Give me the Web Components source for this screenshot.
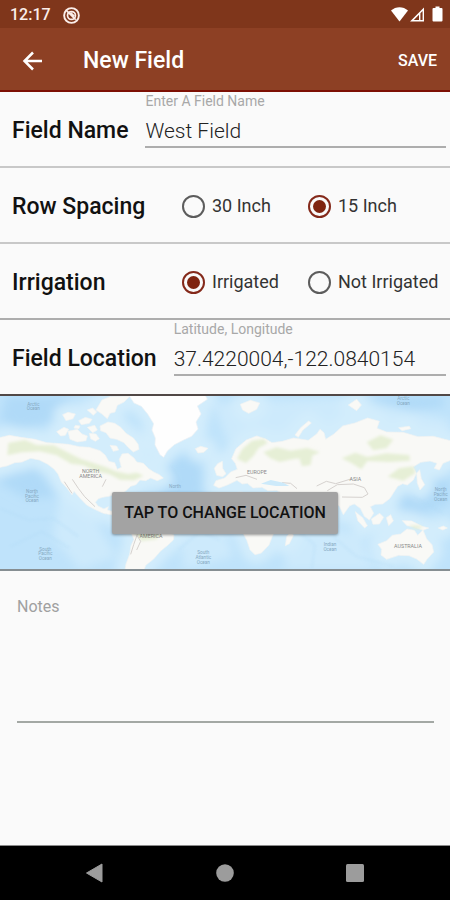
<!DOCTYPE html>
<html lang="en">
<head>
<meta charset="UTF-8">
<meta name="viewport" content="width=device-width, initial-scale=1">
<title>New Field</title>
<style>
  body {
    margin: 0;
    background: #fafafa;
    color: #151515;
    font-family: Roboto, "Liberation Sans", sans-serif;
  }
</style>
</head>
<body>
<field-screen>
  <status-bar slot="top" time="12:17"></status-bar>
  <app-bar slot="top" action="SAVE">New Field</app-bar>
  <text-row label="Field Name" hint="Enter A Field Name" value="West Field"></text-row>
  <choice-row label="Row Spacing" options="30 Inch|15 Inch" selected="1"></choice-row>
  <choice-row class="thin" label="Irrigation" options="Irrigated|Not Irrigated" selected="0"></choice-row>
  <text-row class="dark" label="Field Location" hint="Latitude, Longitude" value="37.4220004,-122.0840154"></text-row>
  <map-picker>TAP TO CHANGE LOCATION</map-picker>
  <notes-field>Notes</notes-field>
  <nav-bar slot="bottom"></nav-bar>
</field-screen>

<script>
// Styles shared by every element
const baseStyle = `
  :host, *, *::before, *::after { box-sizing: border-box; }
  svg { display: block; }
  button { font: inherit; color: inherit; background: none; border: none; margin: 0; padding: 0; cursor: pointer; }
`;

// Styles shared by the form rows
const rowStyle = `
  :host {
    display: block;
    border-bottom: 2px solid #c8c8c8;
  }
  :host(.thin) { border-bottom-color: #adadad; }
  :host(.dark) { border-bottom-color: #514846; }
  .row { min-height: 74px; padding: 0 4px 0 12px; }
  .title { padding-top: 4px; font-size: 23px; line-height: 28px; font-weight: 500; color: #111; white-space: nowrap; }
`;

class FieldScreen extends HTMLElement {
  connectedCallback() {
    const shadow = this.attachShadow({ mode: 'open' });
    shadow.innerHTML = `
      <style>
        ${baseStyle}
        :host { display: flex; flex-direction: column; min-height: 100vh; }
        main { flex: 1; }
      </style>
      <header><slot name="top"></slot></header>
      <main><slot></slot></main>
      <footer><slot name="bottom"></slot></footer>
    `;
  }
}

class StatusBar extends HTMLElement {
  connectedCallback() {
    const shadow = this.attachShadow({ mode: 'open' });
    shadow.innerHTML = `
      <style>
        ${baseStyle}
        :host {
          display: flex;
          align-items: center;
          justify-content: space-between;
          height: 28px;
          padding: 2px 7px 0 10px;
          background: #7f361b;
          color: #fbeeea;
        }
        .left { display: flex; align-items: center; gap: 12px; }
        .right { display: flex; align-items: center; }
        .time { font-size: 16px; line-height: 26px; font-weight: 500; }
      </style>
      <div class="left">
        <span class="time">${this.getAttribute('time')}</span>
        <svg width="17" height="17" viewBox="0 0 18 18" fill="none" stroke="currentColor">
          <circle cx="9" cy="9" r="7.800" stroke-width="2"/>
          <circle cx="9" cy="9" r="4.200" stroke-width="1.800"/>
          <path d="M4 4L13.500 13.500M8 6l4 4" stroke-width="1.800"/>
        </svg>
      </div>
      <div class="right">
        <svg width="52" height="18" viewBox="0 0 52 18" fill="#fff">
          <path d="M0 4.500C4.800 0 12.200 0 17 4.500L8.500 15.500z"/>
          <path d="M33 1.500v14H19zM28 8.800l-5.200 5.200H28zM31.600 5l-2.200 2.200V14h2.200z" fill-rule="evenodd"/>
          <path d="M44.500 .5h4V2h2a1 1 0 0 1 1 1v11.500a1 1 0 0 1-1 1h-8a1 1 0 0 1-1-1V3a1 1 0 0 1 1-1h2z"/>
        </svg>
      </div>
    `;
  }
}

class AppBar extends HTMLElement {
  connectedCallback() {
    const shadow = this.attachShadow({ mode: 'open' });
    shadow.innerHTML = `
      <style>
        ${baseStyle}
        :host {
          display: flex;
          align-items: center;
          height: 64px;
          padding: 4px 13px 0 20px;
          background: #8d4024;
          border-bottom: 2px solid #7d1004;
          color: #fff;
        }
        h1 { flex: 1; margin: 0 0 0 38px; font-size: 23px; line-height: 28px; font-weight: 500; }
        .save { font-size: 16px; line-height: 28px; font-weight: 500; }
      </style>
      <button aria-label="Back">
        <svg width="25" height="24" viewBox="0 0 25 24" fill="none" stroke="currentColor" stroke-width="2.500">
          <path d="M22 12H5M13 3.500L4.500 12l8.500 8.500"/>
        </svg>
      </button>
      <h1><slot></slot></h1>
      <button class="save">${this.getAttribute('action')}</button>
    `;
  }
}

class TextRow extends HTMLElement {
  connectedCallback() {
    const shadow = this.attachShadow({ mode: 'open' });
    shadow.innerHTML = `
      <style>
        ${baseStyle}
        ${rowStyle}
        .row { display: flex; gap: 17px; }
        .title { align-self: center; }
        .field { flex: 1; min-width: 0; display: flex; flex-direction: column; }
        .hint { font-size: 14px; line-height: 18px; color: #a8a8a8; }
        input {
          width: 100%;
          height: 38px;
          margin: 0;
          padding: 6px 0 0;
          border: none;
          border-bottom: 2px solid #adadad;
          border-radius: 0;
          background: none;
          outline: none;
          color: #222;
          font: 300 21px/28px Roboto, "Liberation Sans", sans-serif;
        }
      </style>
      <div class="row">
        <label class="title" for="value">${this.getAttribute('label')}</label>
        <div class="field">
          <label class="hint" for="value">${this.getAttribute('hint')}</label>
          <input id="value" type="text" value="${this.getAttribute('value')}">
        </div>
      </div>
    `;
  }
}

class ChoiceRow extends HTMLElement {
  connectedCallback() {
    const shadow = this.attachShadow({ mode: 'open' });
    const selected = Number(this.getAttribute('selected'));
    const options = this.getAttribute('options').split('|').map((text, i) => `
      <label class="option">
        <input type="radio" name="choice" ${i === selected ? 'checked' : ''}>
        <span>${text}</span>
      </label>
    `).join('');

    shadow.innerHTML = `
      <style>
        ${baseStyle}
        ${rowStyle}
        .row { display: grid; grid-template-columns: 170px 1fr; align-items: center; }
        .options { display: grid; grid-template-columns: 126px 1fr; padding-top: 2px; }
        .option {
          display: flex;
          align-items: center;
          gap: 7px;
          font-size: 18px;
          line-height: 24px;
          color: #333;
          white-space: nowrap;
          cursor: pointer;
        }
        input {
          appearance: none;
          flex: none;
          display: grid;
          place-items: center;
          width: 23px;
          height: 23px;
          margin: 0;
          border: 2px solid #5c5c5c;
          border-radius: 50%;
        }
        input:checked { border-color: #84291a; }
        input:checked::before {
          content: "";
          width: 13px;
          height: 13px;
          border-radius: 50%;
          background: #7f2410;
        }
      </style>
      <div class="row">
        <span class="title" id="title">${this.getAttribute('label')}</span>
        <div class="options" role="radiogroup" aria-labelledby="title">${options}</div>
      </div>
    `;
  }
}

class MapPicker extends HTMLElement {
  connectedCallback() {
    const shadow = this.attachShadow({ mode: 'open' });
    shadow.innerHTML = `
      <style>
        ${baseStyle}
        :host {
          display: grid;
          place-items: center;
          border-bottom: 2px solid #868e92;
        }
        svg, button { grid-area: 1 / 1; }
        svg { width: 100%; height: auto; }
        button {
          z-index: 1;
          margin-top: 60px;
          padding: 0 12px;
          border-radius: 2px;
          background: #a3a3a3;
          box-shadow: 0 1px 3px rgba(0, 0, 0, 0.4);
          color: #111;
          font-size: 16px;
          line-height: 42px;
          font-weight: 500;
          white-space: nowrap;
        }
        .land { fill: #f9f9f6; stroke: #f1f3f1; stroke-width: 2; stroke-linejoin: round; }
        .shelf { fill: none; stroke: #d3edfc; stroke-width: 56; stroke-linejoin: round; }
        .forest { fill: #e6efd6; }
        .line { fill: none; stroke: #d6d2cf; stroke-width: 3; stroke-linejoin: round; }
        text { font-size: 14px; text-anchor: middle; fill: #86a9c2; }
        text.region { fill: #8a8a8a; font-size: 16px; }
      </style>
      <svg viewBox="0 18 1350 519" aria-hidden="true">
        <defs>
          <filter id="soft" x="-10%" y="-10%" width="120%" height="120%"><feGaussianBlur stdDeviation="15"/></filter>
          <filter id="edge"><feGaussianBlur stdDeviation="5"/></filter>
          <filter id="coast"><feGaussianBlur stdDeviation="2"/></filter>
          <g id="continents">
            <path d="M-10 145L28 136 62 142 105 148 140 158 168 160 205 163 238 170 268 172 300 182 316 196 326 214 344 218 352 238 364 232 358 208 366 192 384 190 402 204 410 216 430 220 446 236 461 246 478 254 490 264 472 272 452 264 437 272 420 270 408 284 392 289 378 302 364 312 358 324 346 312 330 318 308 322 295 326 286 337 294 348 312 357 325 350 322 360 340 365 362 376 400 392 397 402 365 394 339 375 310 370 282 357 260 345 243 328 222 304 216 314 201 294 184 276 174 252 162 237 142 222 118 210 92 205 66 216 44 218 20 228-10 234z"/>
            <path d="M392 394L424 386 458 400 489 421 522 435 520 450 503 466 481 484 461 507 437 526 430 545H374L378 522 389 493 393 467 402 448 391 423z"/>
            <path d="M188 74L204 67 226 72 219 86 198 92zM236 92L256 82 276 88 268 100 244 104zM288 60L306 30 330 20 390 18 372 36 352 46 345 66 330 70 322 86 306 72zM170 125L192 112 206 118 196 136 182 138zM204 124L232 118 246 132 262 138 258 152 232 156 210 148zM262 112L284 106 292 120 278 128zM300 108L324 96 344 100 362 112 378 130 400 144 414 162 417 178 400 186 384 172 372 158 350 148 330 144 318 128 302 122zM268 130L288 132 298 146 286 154 272 146zM330 166L350 168 356 180 340 184zM262 60L278 54 290 66 280 76zM226 106L240 108 236 116 222 114z"/>
            <path d="M586 176L602 169 624 175 611 187 594 189zM643 235L653 221 667 214 668 235 678 251 668 260 650 256z"/>
            <path d="M682 285L657 294 641 286 648 272 674 264 692 246 712 238 706 220 695 206 708 176 739 150 770 138 797 147 816 158 847 154 881 144 925 151 951 131 960 118 972 128 977 148 1002 132 1028 108 1065 99 1103 84 1138 94 1131 115 1160 126 1209 127 1254 140 1300 139 1354 153V210L1329 220 1318 240 1303 235 1311 220 1290 213 1262 217 1239 231 1249 250 1240 270 1222 285 1208 281 1193 289 1184 303 1169 326 1148 342 1126 343 1111 350 1121 370 1108 390 1093 379 1081 355 1063 342 1049 347 1030 374 1019 350 1005 335 982 323 953 317 933 326 923 346 891 360 877 342 855 313 829 301 804 302 786 292 759 294 742 280 727 282 711 271z"/>
            <path d="M680 311L724 306 770 317 812 321 836 352 872 369 856 391 829 414 817 439 807 465 784 489 765 494 750 479 741 452 727 425 716 402 691 398 670 387 654 363 660 331z"/>
            <path d="M860 440L875 423 880 437 868 461 856 467zM1066 365L1088 383 1102 407 1094 414 1074 393zM1114 387L1139 370 1151 382 1138 402 1119 403zM1159 383L1172 374 1180 393 1166 407zM1207 392L1235 393 1266 409 1286 414 1269 421 1242 410 1221 407zM1260 300L1252 279 1250 250 1259 239 1264 266 1274 284z"/>
            <path d="M1134 463L1160 452 1177 436 1202 432 1221 417 1243 421 1253 436 1269 420 1280 447 1296 464 1301 486 1281 508 1271 523 1250 507 1227 497 1196 496 1160 508 1143 495 1145 478z"/>
            <path d="M721 43L751 31 779 39 770 58 746 70 728 60zM885 135L902 113 926 93 934 99 908 121 895 142zM1045 45L1070 28 1084 45 1070 62zM1196 113L1228 109 1232 116 1206 122zM1315 414L1330 408 1342 414 1328 420z"/>
          </g>
          <path id="greenland" d="M386 15L402 39 424 49 443 72 461 101 456 120 466 144 465 165 480 194 491 202 502 183 523 164 551 150 575 139 594 117 588 96 603 72 592 48 622 28 615 15z"/>
        </defs>
        <rect y="18" width="1350" height="519" fill="#bfe3fb"/>
        <g filter="url(#soft)">
          <path fill="#b0daf8" d="M20 18H220L155 95 60 120 0 90zM0 225L110 235 170 320 80 325 0 280zM490 210L600 195 610 330 520 350 450 290zM1100 18H1330V50L1190 65zM1180 310L1350 210V340L1220 390z"/>
          <path fill="#cdeafc" d="M180 310L280 380 350 500 240 540 160 440zM540 370L650 340 700 500 550 540zM880 400L1080 430 1120 540H850zM640 40L1050 20 1350 90V140L960 130 680 150z"/>
          <use href="#continents" class="shelf"/>
          <use href="#greenland" class="shelf"/>
        </g>
        <path d="M0 355L85 390 160 385 235 440M30 470L125 425 210 475M515 225L545 285 500 360M535 480L600 425 660 450M890 420L945 465 935 537M1000 440L1070 500 1180 528M1240 320L1330 370" fill="none" stroke="#add8f5" stroke-width="6" opacity=".3" filter="url(#edge)"/>
        <use href="#continents" class="land" filter="url(#coast)"/>
        <use href="#greenland" fill="#fefefe" stroke="#eef2f4" stroke-width="2"/>
        <g class="forest" filter="url(#edge)">
          <path d="M25 159L75 150 110 165 161 166 205 188 243 207 287 221 319 232 346 244 385 252 410 248 431 257 402 271 360 269 327 252 289 244 250 226 213 221 170 196 119 184 65 187 22 196z"/>
          <path d="M711 206L727 177 756 152 791 147 803 159 776 174 760 198 738 219zM790 187L830 172 872 182 922 174 960 187 926 202 880 207 839 216 811 205zM898 205L937 196 932 225 906 229zM1025 205L1066 188 1102 201 1158 190 1228 195 1230 212 1168 216 1102 213 1084 238 1054 219zM1100 157L1142 136 1180 149 1160 174 1120 181zM1197 235L1241 229 1246 249 1210 272 1163 260zM1225 405L1260 407 1270 414 1246 417z"/>
          <path d="M402 427L437 409 486 425 470 448 424 453z"/>
        </g>
        <g class="line">
          <path d="M217 268L235 295 254 320 285 350M193 275L216 310M307 290L318 268M413 430L401 464 392 493M411 436L422 454 410 480M707 263L738 256 771 268M846 278L872 280 891 296M950 288L979 274 1007 281 1056 266M982 302L1012 284 1060 282 1093 293 1104 312 1087 322 1026 321"/>
        </g>
        <path d="M783 281L812 270 850 278 868 288 828 288z" fill="#cdeafa"/>
        <text x="100" y="47">Arctic</text>
        <text x="100" y="61">Ocean</text>
        <text x="96" y="309">North</text>
        <text x="96" y="323">Pacific</text>
        <text x="96" y="337">Ocean</text>
        <text x="136" y="482">South</text>
        <text x="136" y="496">Pacific</text>
        <text x="136" y="510">Ocean</text>
        <text x="525" y="295">North</text>
        <text x="610" y="493">South</text>
        <text x="610" y="507">Atlantic</text>
        <text x="610" y="521">Ocean</text>
        <text x="990" y="468">Indian</text>
        <text x="990" y="482">Ocean</text>
        <text x="1210" y="31">Arctic</text>
        <text x="1210" y="45">Ocean</text>
        <text x="1322" y="304">North</text>
        <text x="1322" y="318">Pacific</text>
        <text x="1322" y="332">Ocean</text>
        <text class="region" x="272" y="248">NORTH</text>
        <text class="region" x="272" y="263">AMERICA</text>
        <text class="region" x="453" y="445">AMERICA</text>
        <text class="region" x="771" y="252">EUROPE</text>
        <text class="region" x="1066" y="274">ASIA</text>
        <text class="region" x="1224" y="473">AUSTRALIA</text>
      </svg>
      <button><slot></slot></button>
    `;
  }
}

class NotesField extends HTMLElement {
  connectedCallback() {
    const shadow = this.attachShadow({ mode: 'open' });
    shadow.innerHTML = `
      <style>
        ${baseStyle}
        :host { display: block; padding: 24px 16px 24px 17px; }
        label { display: block; font-size: 16px; line-height: 24px; color: #a0a0a0; }
        textarea {
          display: block;
          width: 100%;
          height: 104px;
          margin: 0;
          padding: 0;
          border: none;
          border-bottom: 2px solid #a3a8a4;
          border-radius: 0;
          background: none;
          outline: none;
          resize: none;
          font: 300 16px/24px Roboto, "Liberation Sans", sans-serif;
        }
      </style>
      <label for="notes"><slot></slot></label>
      <textarea id="notes"></textarea>
    `;
  }
}

class NavBar extends HTMLElement {
  connectedCallback() {
    const shadow = this.attachShadow({ mode: 'open' });
    shadow.innerHTML = `
      <style>
        ${baseStyle}
        :host {
          display: grid;
          grid-template-columns: repeat(3, 1fr);
          height: 55px;
          padding: 0 30px;
          border-top: 1px solid #8a8a8a;
          background: #000;
          color: #9c9c9c;
        }
        button { display: grid; place-items: center; }
      </style>
      <button aria-label="Back">
        <svg width="20" height="20" viewBox="0 0 20 20" fill="currentColor"><path d="M17 1v18L1.500 10z" stroke="currentColor" stroke-linejoin="round"/></svg>
      </button>
      <button aria-label="Home">
        <svg width="20" height="20" viewBox="0 0 20 20" fill="currentColor"><circle cx="10" cy="10" r="8.800"/></svg>
      </button>
      <button aria-label="Recent apps">
        <svg width="20" height="20" viewBox="0 0 20 20" fill="currentColor"><rect x="1" y="1" width="18" height="18" rx="1.500"/></svg>
      </button>
    `;
  }
}

customElements.define('field-screen', FieldScreen);
customElements.define('status-bar', StatusBar);
customElements.define('app-bar', AppBar);
customElements.define('text-row', TextRow);
customElements.define('choice-row', ChoiceRow);
customElements.define('map-picker', MapPicker);
customElements.define('notes-field', NotesField);
customElements.define('nav-bar', NavBar);
</script>
</body>
</html>
